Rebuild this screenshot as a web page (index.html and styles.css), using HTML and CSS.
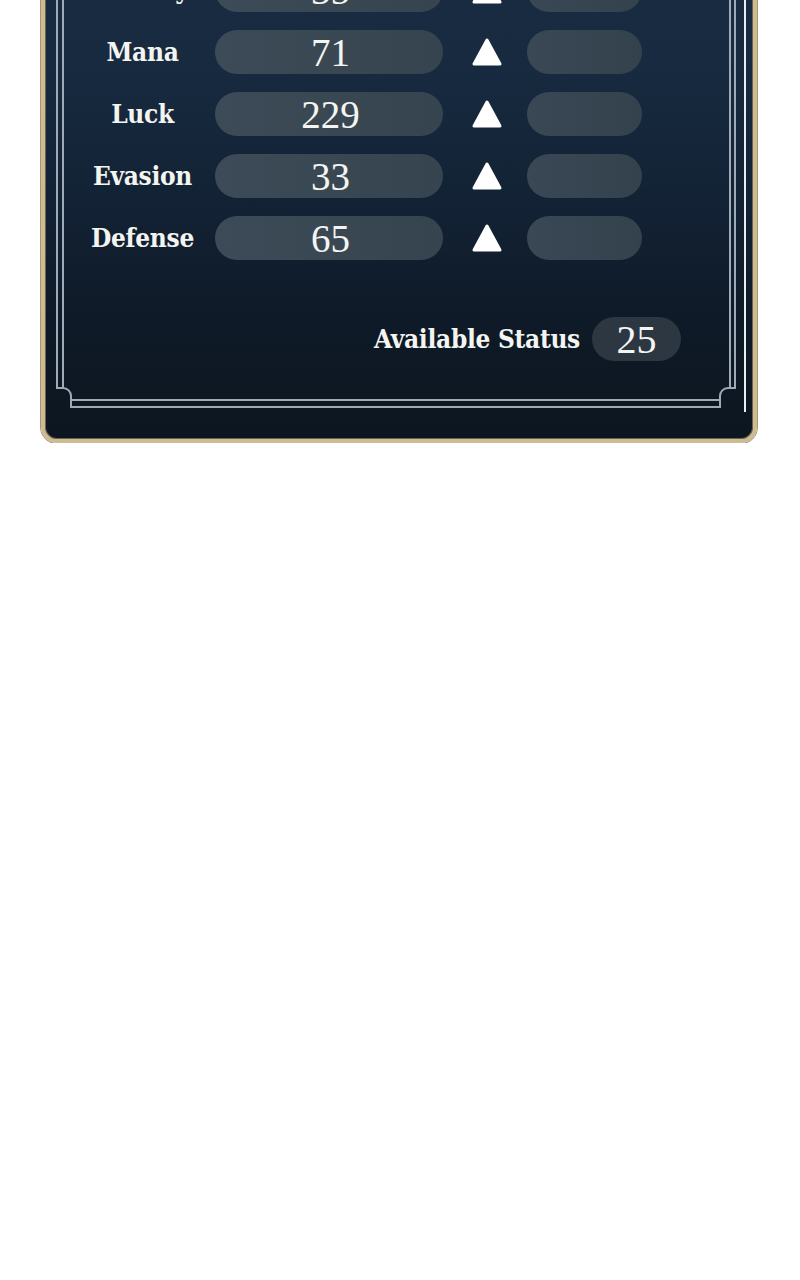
FILE: index.html
```html
<!DOCTYPE html>
<html lang="en">
<head>
    <meta charset="UTF-8">
    <meta name="viewport" content="width=device-width, initial-scale=1.0">
    <title>Status Window</title>
    <link rel="stylesheet" href="styles.css">
</head>
<body>
    <div class="status-panel">
        <!-- Silver double frame with notched corners -->
        <svg class="frame" viewBox="0 0 708 495" preserveAspectRatio="none" aria-hidden="true">
            <path d="M12 0 V444 H18 A8 8 0 0 1 26 452 V463 H675 V452 A8 8 0 0 1 683 444 H690 V0" />
            <path d="M18 0 V444 M26 456 H675 M683 444 H685 V0" />
            <line x1="700" y1="0" x2="700" y2="468" class="edge" />
        </svg>

        <!-- Stat rows -->
        <div class="stat-list">
            <div class="stat-label">Vitality</div>
            <div class="stat-value">35</div>
            <div class="stat-up"><svg viewBox="0 0 32 30"><path d="M16 3 L29 27 H3 Z" /></svg></div>
            <div class="stat-extra"></div>

            <div class="stat-label">Mana</div>
            <div class="stat-value">71</div>
            <div class="stat-up"><svg viewBox="0 0 32 30"><path d="M16 3 L29 27 H3 Z" /></svg></div>
            <div class="stat-extra"></div>

            <div class="stat-label">Luck</div>
            <div class="stat-value">229</div>
            <div class="stat-up"><svg viewBox="0 0 32 30"><path d="M16 3 L29 27 H3 Z" /></svg></div>
            <div class="stat-extra"></div>

            <div class="stat-label">Evasion</div>
            <div class="stat-value">33</div>
            <div class="stat-up"><svg viewBox="0 0 32 30"><path d="M16 3 L29 27 H3 Z" /></svg></div>
            <div class="stat-extra"></div>

            <div class="stat-label">Defense</div>
            <div class="stat-value">65</div>
            <div class="stat-up"><svg viewBox="0 0 32 30"><path d="M16 3 L29 27 H3 Z" /></svg></div>
            <div class="stat-extra"></div>
        </div>

        <!-- Points left to spend -->
        <div class="available">
            <span class="available-label">Available Status</span>
            <span class="available-value">25</span>
        </div>
    </div>
</body>
</html>
```

FILE: styles.css
```css
/* Page */
body {
    margin: 0;
    background: #ffffff;
    font-family: "Liberation Serif", "DejaVu Serif", serif;
    color: #f4f4f1;
}

/* Status window */
.status-panel {
    position: relative;
    box-sizing: border-box;
    height: 503px;
    margin: -60px 43px 0 41px;
    padding: 24px 72px 0 25px;
    border: 4px solid #cdbb95;
    border-radius: 16px;
    box-shadow: 0 0 0 1px #a8966f, inset 0 0 0 1px #6f6448;
    background: linear-gradient(180deg, #1a2c42 0%, #172a3f 25%, #132336 50%, #0f1b29 72%, #0c1620 100%);
}

.frame {
    position: absolute;
    top: 0;
    left: 0;
    width: 100%;
    height: 100%;
    fill: none;
    stroke: #9eaab8;
    stroke-width: 2;
}

.frame .edge {
    stroke: #e9eef2;
}

/* Stat grid */
.stat-list {
    position: relative;
    display: grid;
    grid-template-columns: 145px 228px 84px 115px;
    grid-auto-rows: 44px;
    row-gap: 18px;
    align-items: center;
}

.stat-label,
.available-label {
    font-family: "DejaVu Serif Condensed", "DejaVu Serif", serif;
    font-stretch: condensed;
    font-weight: bold;
    font-size: 26px;
    letter-spacing: -0.3px;
}

.stat-label {
    text-align: center;
}

.stat-value {
    height: 44px;
    line-height: 46px;
    border-radius: 22px;
    background: linear-gradient(90deg, #3d4b58, #36444f);
    text-align: center;
    font-size: 39px;
    padding-left: 3px;
    box-sizing: border-box;
}

.stat-up {
    display: flex;
    justify-content: center;
    padding-left: 4px;
}

.stat-up svg {
    width: 32px;
    height: 30px;
    fill: #ffffff;
    stroke: #ffffff;
    stroke-width: 3;
    stroke-linejoin: round;
}

.stat-extra {
    height: 44px;
    border-radius: 22px;
    background: linear-gradient(90deg, #3a4855, #34424e);
}

/* Available points */
.available {
    position: relative;
    display: flex;
    justify-content: flex-end;
    align-items: center;
    gap: 12px;
    margin-top: 57px;
}

.available-value {
    width: 89px;
    height: 44px;
    line-height: 46px;
    border-radius: 22px;
    background: #2c3741;
    text-align: center;
    font-size: 40px;
}
```
